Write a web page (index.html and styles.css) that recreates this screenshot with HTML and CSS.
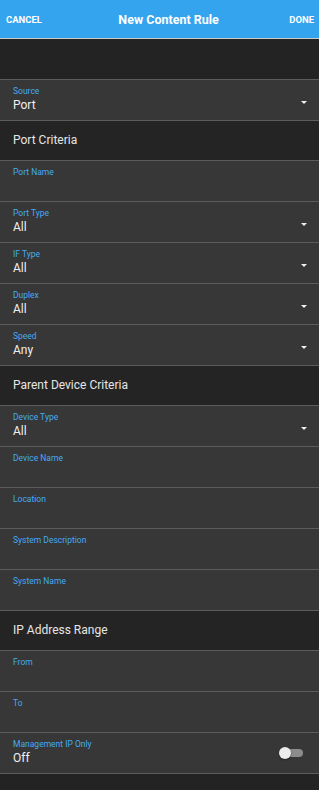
FILE: index.html
```html
<!DOCTYPE html>
<html lang="en">
<head>
    <meta charset="UTF-8">
    <meta name="viewport" content="width=device-width, initial-scale=1.0">
    <title>New Content Rule</title>
    <link rel="stylesheet" href="styles.css">
</head>
<body>
    <div class="topbar">
        <span class="action">CANCEL</span>
        <span class="title">New Content Rule</span>
        <span class="action">DONE</span>
    </div>
    <div class="spacer"></div>

    <div class="field select">
        <div class="field-text"><div class="label">Source</div><div class="value">Port</div></div>
        <span class="caret"></span>
    </div>

    <div class="section">Port Criteria</div>
    <div class="field"><div class="field-text"><div class="label">Port Name</div></div></div>
    <div class="field select">
        <div class="field-text"><div class="label">Port Type</div><div class="value">All</div></div>
        <span class="caret"></span>
    </div>
    <div class="field select">
        <div class="field-text"><div class="label">IF Type</div><div class="value">All</div></div>
        <span class="caret"></span>
    </div>
    <div class="field select">
        <div class="field-text"><div class="label">Duplex</div><div class="value">All</div></div>
        <span class="caret"></span>
    </div>
    <div class="field select">
        <div class="field-text"><div class="label">Speed</div><div class="value">Any</div></div>
        <span class="caret"></span>
    </div>

    <div class="section">Parent Device Criteria</div>
    <div class="field select">
        <div class="field-text"><div class="label">Device Type</div><div class="value">All</div></div>
        <span class="caret"></span>
    </div>
    <div class="field"><div class="field-text"><div class="label">Device Name</div></div></div>
    <div class="field"><div class="field-text"><div class="label">Location</div></div></div>
    <div class="field"><div class="field-text"><div class="label">System Description</div></div></div>
    <div class="field"><div class="field-text"><div class="label">System Name</div></div></div>

    <div class="section">IP Address Range</div>
    <div class="field"><div class="field-text"><div class="label">From</div></div></div>
    <div class="field"><div class="field-text"><div class="label">To</div></div></div>
    <div class="field select">
        <div class="field-text"><div class="label">Management IP Only</div><div class="value">Off</div></div>
        <span class="toggle"><span class="thumb"></span></span>
    </div>
</body>
</html>
```

FILE: styles.css
```css
body {
    margin: 0;
    font-family: Roboto, "Liberation Sans", sans-serif;
    background-color: #232323;
    color: #ececec;
}
.topbar {
    height: 38px;
    background-color: #35a4ee;
    border-bottom: 1px solid #c9c9c9;
    display: flex;
    align-items: center;
    justify-content: space-between;
    padding: 0 5px 0 6px;
    color: #fff;
}
.action {
    font-size: 9.5px;
    font-weight: bold;
}
.title {
    font-size: 12.5px;
    font-weight: bold;
    margin-left: 6px;
}
.spacer {
    height: 40px;
    border-bottom: 1px solid #5c5c5c;
}
.section {
    height: 39px;
    line-height: 39px;
    padding-left: 13px;
    font-size: 12px;
    color: #e6e6e6;
    background-color: #242424;
    border-bottom: 1px solid #5c5c5c;
}
.field {
    height: 40px;
    background-color: #373737;
    border-bottom: 1px solid #5c5c5c;
    display: flex;
    align-items: flex-start;
    padding: 0 12px 0 13px;
}
.field-text {
    flex: 1;
    padding-top: 6px;
}
.label {
    font-size: 8.5px;
    line-height: 11px;
    color: #45aaf2;
}
.value {
    font-size: 12px;
    line-height: 14px;
    margin-top: 1px;
    color: #f0f0f0;
}
.select {
    align-items: center;
}
.select .field-text {
    align-self: flex-start;
}
.caret {
    width: 0;
    height: 0;
    border-left: 3.5px solid transparent;
    border-right: 3.5px solid transparent;
    border-top: 3.5px solid #f0f0f0;
    margin-top: 5px;
}
.toggle {
    position: relative;
    width: 20px;
    height: 8px;
    border-radius: 4px;
    background-color: #8c8c8c;
    margin-right: 4px;
}
.thumb {
    position: absolute;
    left: -4px;
    top: -2px;
    width: 12px;
    height: 12px;
    border-radius: 50%;
    background-color: #ececec;
    box-shadow: 0 1px 2px rgba(0, 0, 0, 0.4);
}
```
